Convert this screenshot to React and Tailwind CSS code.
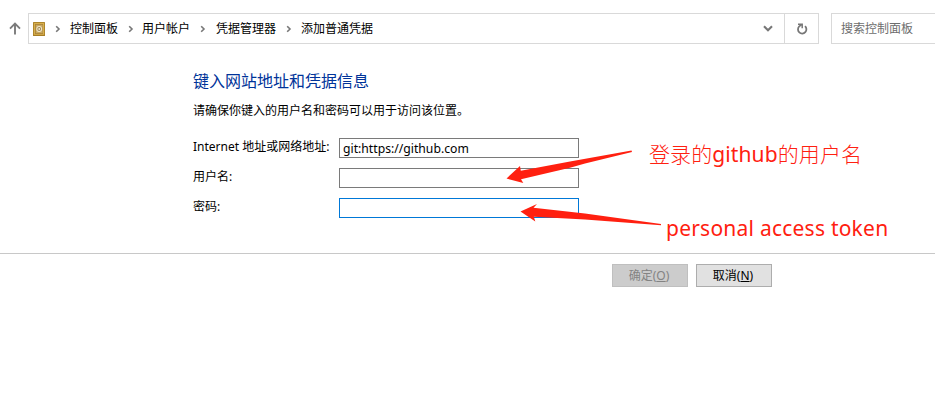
const crumbs = [
  { text: '控制面板', gap: 'ml-[9px]' },
  { text: '用户帐户', gap: 'ml-[8px]' },
  { text: '凭据管理器', gap: 'ml-[10px]' },
  { text: '添加普通凭据', gap: 'ml-[9px]' },
];

function Chevron() {
  return (
    <svg className="ml-[10px] h-[8px] w-[6px] shrink-0" viewBox="0 0 6 8" fill="none" stroke="#777" strokeWidth="1.6">
      <path d="M1.2 1.2 4 4 1.2 6.8" />
    </svg>
  );
}

function SafeIcon() {
  return (
    <svg className="ml-[4px] h-[14px] w-[12px] shrink-0" viewBox="0 0 12 14">
      <rect width="12" height="14" rx="0.6" fill="#a67c24" />
      <rect x="0.8" y="0.8" width="10.4" height="12" fill="#d6ae4c" />
      <rect x="2" y="2" width="8" height="10" fill="#a98338" />
      <rect x="2.8" y="2.8" width="6.8" height="8.4" fill="#c9a862" />
      <circle cx="6.2" cy="7" r="2.9" fill="#efe6cb" />
      <circle cx="6.2" cy="7" r="1.9" fill="#9c8452" />
      <circle cx="6.2" cy="7" r="0.9" fill="#f3ead0" />
    </svg>
  );
}

function Row({ label, value = '', focused = false }) {
  return (
    <div className="flex h-[20px] items-start">
      <label className="w-[146px] shrink-0 whitespace-nowrap leading-[18px]">{label}</label>
      <div className={`h-[20px] w-[240px] border bg-white pl-[3px] text-[12.2px] leading-[20px] ${focused ? 'border-[#0078d7]' : 'border-[#7a7a7a]'}`}>
        {value}
      </div>
    </div>
  );
}

export default function App() {
  return (
    <div className="relative h-[408px] w-[935px] overflow-hidden bg-white font-['Noto_Sans','Noto_Sans_CJK_SC',sans-serif] text-[12px] text-black">
      <header className="flex h-[44px] pt-[13px]">
        <div className="flex w-[28px] shrink-0 items-center pl-[9px]">
          <svg className="h-[13px] w-[12px]" viewBox="0 0 12 13" fill="none" stroke="#7b7b7b" strokeWidth="1.9">
            <path d="M6 12.5V1.6M1 6.6 6 1.5l5 5.1" />
          </svg>
        </div>
        <div className="flex h-[31px] w-[791px] shrink-0 border border-[#d9d9d9]">
          <nav className="flex min-w-0 flex-1 items-center">
            <SafeIcon />
            {crumbs.map((c) => (
              <div key={c.text} className="flex items-center">
                <Chevron />
                <span className={`whitespace-nowrap leading-[16px] ${c.gap}`}>{c.text}</span>
              </div>
            ))}
            <svg className="mr-[11px] ml-auto h-[7px] w-[10px]" viewBox="0 0 10 7" fill="none" stroke="#777" strokeWidth="2.1">
              <path d="M1 1.2 5 5.2 9 1.2" />
            </svg>
          </nav>
          <div className="flex w-[34px] items-center justify-center border-l border-[#d9d9d9]">
            <svg className="h-[12px] w-[12px]" viewBox="0 0 12 12" fill="none" stroke="#777" strokeWidth="1.8">
              <path d="M9 3.2A4.2 4.2 0 1 1 3.2 3.4L5.6 1.6" />
              <path d="M2 1.2H6.2V5.2" strokeWidth="1.5" />
            </svg>
          </div>
        </div>
        <div className="ml-[12px] flex h-[31px] w-[120px] shrink-0 items-center border border-[#d9d9d9] pl-[9px] text-[#6d6d6d]">
          搜索控制面板
        </div>
      </header>

      <main className="h-[209px] pt-[26px] pl-[193px]">
        <h1 className="text-[16px] leading-[22px] text-[#003399]">键入网站地址和凭据信息</h1>
        <p className="mt-[10px] leading-[18px]">请确保你键入的用户名和密码可以用于访问该位置。</p>
        <form className="mt-[18px] flex flex-col gap-[10px]">
          <Row label="Internet 地址或网络地址:" value="git:https://github.com" />
          <Row label="用户名:" />
          <Row label="密码:" focused />
        </form>
      </main>

      <footer className="flex gap-[8px] border-t border-[#c8c8c8] pt-[10px] pl-[612px]">
        <button className="h-[23px] w-[76px] border border-[#bfbfbf] bg-[#cccccc] pr-[2px] leading-[20px] text-[#838383]">
          确定(<u>O</u>)
        </button>
        <button className="h-[23px] w-[76px] border border-[#adadad] bg-[#e1e1e1] pr-[2px] leading-[20px]">
          取消(<u>N</u>)
        </button>
      </footer>

      <svg className="absolute top-0 left-0 h-[408px] w-[935px]" viewBox="0 0 935 408" fill="#ff2010">
        <path d="M631.5 150.6 570 161.5 520.8 170.8 520 166 506.5 178.5 523.3 183 521 179.3 570 167.8 585 163.6 632 152Z" />
        <path d="M661 224 585 213.6 533.5 207.7 537 204 520.5 211.5 535.3 221.5 533.8 216.7 585 219.6 661 225.2Z" />
      </svg>
      <span className="absolute top-[139px] left-[649px] text-[21px] leading-[30px] font-light tracking-[0.1px] whitespace-nowrap text-[#ff2010]">
        登录的<span className="font-normal">github</span>的用户名
      </span>
      <span className="absolute top-[213px] left-[666px] text-[21px] leading-[30px] tracking-[0.23px] whitespace-nowrap text-[#ff2010]">personal access token</span>
    </div>
  );
}
